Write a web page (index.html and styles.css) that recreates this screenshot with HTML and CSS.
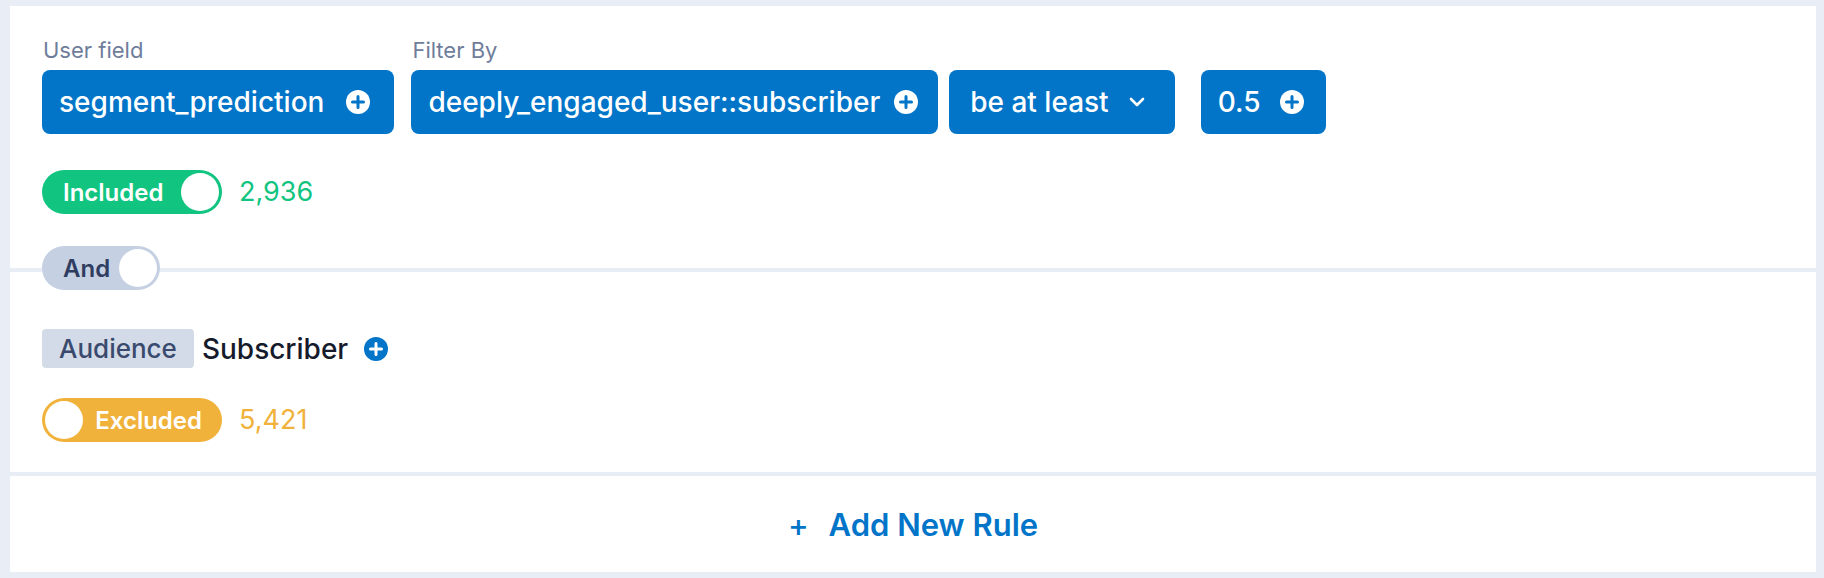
FILE: index.html
```html
<!DOCTYPE html>
<html>
<head>
<meta charset="utf-8">
<link rel="stylesheet" href="styles.css">
</head>
<body>
<div class="panel">
  <section class="rule">
    <div class="fields">
      <div class="field">
        <div class="label">User field</div>
        <div class="controls">
          <button class="chip wide">segment_prediction
            <svg class="plus" viewBox="0 0 24 24"><circle cx="12" cy="12" r="12" fill="#fff"/><path d="M12 6.5v11M6.5 12h11" stroke="#0275c9" stroke-width="3" stroke-linecap="round"/></svg>
          </button>
        </div>
      </div>
      <div class="field">
        <div class="label">Filter By</div>
        <div class="controls">
          <button class="chip tight">deeply_engaged_user::subscriber
            <svg class="plus" viewBox="0 0 24 24"><circle cx="12" cy="12" r="12" fill="#fff"/><path d="M12 6.5v11M6.5 12h11" stroke="#0275c9" stroke-width="3" stroke-linecap="round"/></svg>
          </button>
          <button class="chip select">be at least
            <svg class="chev" viewBox="0 0 16 10"><path d="M2 2l6 6 6-6" fill="none" stroke="#fff" stroke-width="2.6" stroke-linecap="round" stroke-linejoin="round"/></svg>
          </button>
        </div>
      </div>
      <div class="field value">
        <div class="controls">
          <button class="chip">0.5
            <svg class="plus" viewBox="0 0 24 24"><circle cx="12" cy="12" r="12" fill="#fff"/><path d="M12 6.5v11M6.5 12h11" stroke="#0275c9" stroke-width="3" stroke-linecap="round"/></svg>
          </button>
        </div>
      </div>
    </div>
    <div class="status">
      <div class="toggle on"><span class="toggle-text">Included</span><span class="knob"></span></div>
      <span class="count green">2,936</span>
    </div>
  </section>

  <div class="joiner">
    <div class="toggle and"><span class="toggle-text">And</span><span class="knob"></span></div>
  </div>

  <section class="rule second">
    <div class="audience">
      <span class="tag">Audience</span>
      <span class="aud-name">Subscriber</span>
      <svg class="plus small" viewBox="0 0 24 24"><circle cx="12" cy="12" r="12" fill="#0275c9"/><path d="M12 6.5v11M6.5 12h11" stroke="#fff" stroke-width="3" stroke-linecap="round"/></svg>
    </div>
    <div class="status">
      <div class="toggle off"><span class="knob"></span><span class="toggle-text">Excluded</span></div>
      <span class="count orange">5,421</span>
    </div>
  </section>

  <div class="add-rule">
    <span class="add-plus">+</span>
    <span>Add New Rule</span>
  </div>
</div>
</body>
</html>
```

FILE: styles.css
```css
* { box-sizing: border-box; }

html, body {
  margin: 0;
  padding: 0;
  background: #e9edf5;
  font-family: Inter, "Noto Sans", "Liberation Sans", sans-serif;
}

.panel {
  margin: 6px 8px 8px 10px;
  background: #e9edf5;
  display: flex;
  flex-direction: column;
}

.rule {
  background: #fff;
  padding: 31px 32px 0 32px;
}

.rule.second {
  padding-top: 39px;
  padding-bottom: 30px;
}

.rule.second .status {
  margin-top: 30px;
}

.fields {
  display: flex;
  align-items: flex-end;
  gap: 17px;
}

.field {
  display: flex;
  flex-direction: column;
  gap: 7px;
}

.field.value {
  margin-left: 9px;
}

.label {
  font-size: 22px;
  line-height: 26px;
  color: #6f7d9a;
  padding-left: 1px;
}

.controls {
  display: flex;
  gap: 11px;
}

.chip {
  display: inline-flex;
  align-items: center;
  gap: 20px;
  height: 64px;
  padding: 0 22px 0 17px;
  border: 0;
  border-radius: 8px;
  background: #0275c9;
  color: #fff;
  font-family: inherit;
  font-size: 28px;
  font-weight: 500;
}

.chip.wide {
  gap: 22px;
  padding-right: 24px;
}

.chip.tight {
  gap: 14px;
  padding-right: 20px;
}

.chip.select {
  padding: 0 30px 0 21px;
}

.plus {
  width: 24px;
  height: 24px;
  flex: none;
}

.chev {
  width: 16px;
  height: 10px;
  flex: none;
}

.status {
  display: flex;
  align-items: center;
  gap: 17px;
  margin-top: 36px;
}

.toggle {
  display: flex;
  align-items: center;
  justify-content: space-between;
  height: 44px;
  width: 180px;
  border-radius: 22px;
  padding: 3px;
  font-size: 24px;
  font-weight: 600;
  color: #fff;
}

.toggle .knob {
  width: 38px;
  height: 38px;
  border-radius: 50%;
  background: #fff;
  flex: none;
}

.toggle.on {
  background: #11c581;
  padding-left: 21px;
}

.toggle.off {
  background: #f0b23b;
  padding-right: 20px;
}

.toggle.and {
  width: 118px;
  background: #c5d0e2;
  color: #2f3d60;
  padding-left: 21px;
}

.count {
  font-size: 27px;
  line-height: 32px;
}

.green { color: #11c581; }
.orange { color: #f0b23b; }

.joiner {
  background: linear-gradient(#e9edf5, #e9edf5) 0 54px / 100% 4px no-repeat, #fff;
  padding: 32px 32px 0 32px;
}

.audience {
  display: flex;
  align-items: center;
  height: 39px;
}

.tag {
  display: inline-flex;
  align-items: center;
  height: 39px;
  padding: 0 17px;
  border-radius: 4px;
  background: #d3dbe8;
  color: #3a4a6e;
  font-size: 26px;
  font-weight: 500;
}

.aud-name {
  margin-left: 8px;
  font-size: 28px;
  line-height: 34px;
  font-weight: 500;
  color: #161b2b;
}

.plus.small {
  margin-left: 16px;
}

.add-rule {
  margin-top: 4px;
  height: 96px;
  background: #fff;
  display: flex;
  align-items: center;
  justify-content: center;
  gap: 20px;
  color: #0275c9;
  font-size: 31px;
  font-weight: 600;
}

.add-plus {
  font-weight: 500;
}
```
